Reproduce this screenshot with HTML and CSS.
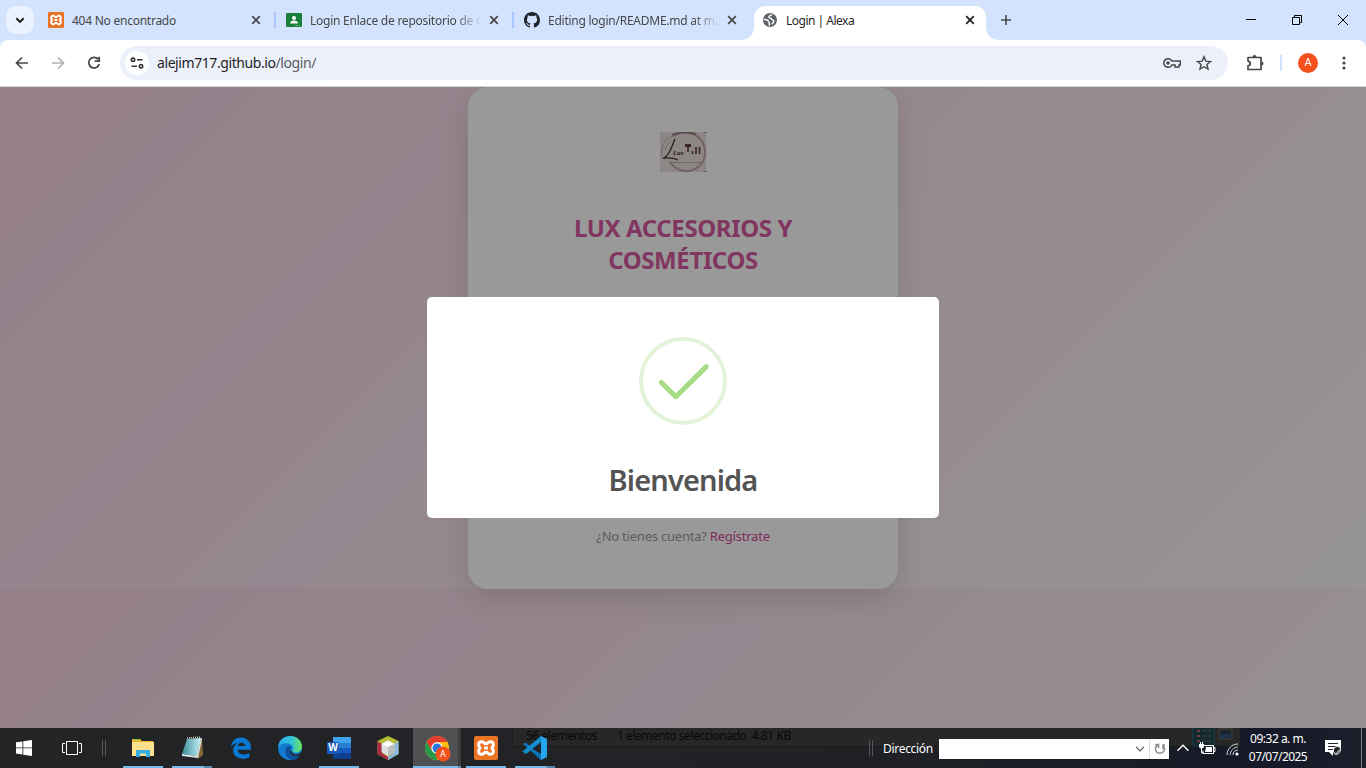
FILE: index.html
```html
<!DOCTYPE html>
<html lang="es">
<head>
<meta charset="utf-8">
<title>Login | Alexa</title>
<link rel="stylesheet" href="styles.css">
</head>
<body>
<svg class="defs" width="0" height="0">
  <symbol id="x" viewBox="0 0 10 10"><path d="M1.2 1.2l7.6 7.6M8.8 1.2L1.2 8.8" fill="none" stroke="currentColor" stroke-width="1.7"/></symbol>
  <symbol id="xampp" viewBox="0 0 24 24"><rect width="24" height="24" rx="2" fill="#ea7424"/><path d="M8.200 5.800C4.200 5.200 3.800 9.500 6 12c-2.200 2.500-1.800 6.800 2.200 6.200 2-.2 2-2 3.800-2s1.800 1.800 3.800 2c4 .6 4.400-3.700 2.200-6.200 2.200-2.500 1.800-6.800-2.200-6.200-2 .2-2 2-3.800 2s-1.800-1.800-3.800-2Z" fill="none" stroke="#fff" stroke-width="3"/><path d="M10 12h4" stroke="#fff" stroke-width="3"/></symbol>
</svg>
<div class="window">
  <header class="tabs">
    <div class="search-tabs"><svg width="10" height="7" viewBox="0 0 10 7"><path d="M1.300 1.200L5 4.900l3.700-3.700" fill="none" stroke="#1f1f1f" stroke-width="2"/></svg></div>
    <div class="tab first"><svg width="16" height="16"><use href="#xampp"/></svg><span class="tab-title t1">404 No encontrado</span><svg class="close" width="10" height="10"><use href="#x"/></svg></div>
    <div class="tab"><svg width="16" height="16" viewBox="0 0 16 16"><rect y="1" width="16" height="14" rx="1" fill="#188038"/><circle cx="8" cy="6" r="2" fill="#fff"/><path d="M4 11.500c0-4 8-4 8 0z" fill="#fff"/><path d="M9 13h5v1H9z" fill="#5bb974"/></svg><span class="tab-title t2 fade">Login Enlace de repositorio de G</span><svg class="close" width="10" height="10"><use href="#x"/></svg></div>
    <div class="tab"><svg width="16" height="16" viewBox="0 0 16 16"><path fill="#1f2328" d="M8 0C3.580 0 0 3.580 0 8c0 3.540 2.290 6.530 5.470 7.590.4.070.55-.17.55-.38 0-.19-.01-.82-.01-1.490-2.010.37-2.530-.49-2.690-.94-.09-.23-.48-.94-.82-1.130-.28-.15-.68-.52-.01-.53.63-.01 1.080.58 1.230.82.72 1.210 1.870.87 2.330.66.07-.52.28-.87.51-1.070-1.780-.2-3.640-.89-3.640-3.950 0-.87.31-1.590.82-2.150-.08-.2-.36-1.020.08-2.120 0 0 .67-.21 2.200.82a7.600 7.600 0 014 0c1.530-1.040 2.200-.82 2.200-.82.44 1.100.16 1.920.08 2.120.51.56.82 1.270.82 2.150 0 3.070-1.870 3.750-3.650 3.950.29.25.54.73.54 1.480 0 1.070-.01 1.930-.01 2.200 0 .21.15.46.55.38A8 8 0 0016 8c0-4.420-3.580-8-8-8z"/></svg><span class="tab-title t3 fade">Editing login/README.md at ma</span><svg class="close" width="10" height="10"><use href="#x"/></svg></div>
    <div class="tab active"><svg width="16" height="16" viewBox="0 0 16 16"><circle cx="8" cy="8" r="7" fill="#5f6368"/><path d="M9.800 2.400c-.2 1.600-3.200.9-3 2.600.2 1.400 2.600.6 2.800 2.200.1 1 2.600.5 2.300 2.300-.3 1.600-1.700 1.300-2 2.900M2 7.600c1.500 0 4 .2 4.200 1.500.2 1.200 1.300.8 1.100 2.400-.1.800.3 1.500-.2 2.200" fill="none" stroke="#fff" stroke-width="1.500"/></svg><span class="tab-title t4">Login | Alexa</span><svg class="close" width="10" height="10"><use href="#x"/></svg></div>
    <svg class="plus" width="10" height="10" viewBox="0 0 10 10"><path d="M0 5h10M5 0v10" stroke="#474747" stroke-width="1.600"/></svg>
    <div class="controls">
      <svg width="46" height="40" viewBox="0 0 46 40"><path d="M18 19.500h10" stroke="#000"/></svg>
      <svg width="46" height="40" viewBox="0 0 46 40"><path d="M18.500 17.500h7v7h-7zM20.500 17.500v-2h7v7h-2" fill="none" stroke="#000"/></svg>
      <svg width="46" height="40" viewBox="0 0 46 40"><path d="M18 15l10 10M28 15L18 25" stroke="#000"/></svg>
    </div>
  </header>
  <nav class="toolbar">
    <svg class="nav-ico" width="36" height="32" viewBox="0 0 36 32"><path d="M24 16H13M18 10.500L12.500 16l5.500 5.500" fill="none" stroke="#474747" stroke-width="1.700"/></svg>
    <svg class="nav-ico" width="36" height="32" viewBox="0 0 36 32"><path d="M12 16h11M18 10.500l5.500 5.500-5.500 5.500" fill="none" stroke="#b0b0b0" stroke-width="1.700"/></svg>
    <svg class="nav-ico" width="36" height="32" viewBox="0 0 36 32"><path d="M22.200 12.300A5.300 5.300 0 1 0 23.200 17M23.200 9.800v4.400h-4.600" fill="none" stroke="#474747" stroke-width="1.800"/></svg>
    <div class="omnibox">
      <div class="site"><svg width="14" height="12" viewBox="0 0 14 12"><g fill="none" stroke="#333" stroke-width="1.600"><circle cx="3" cy="2.800" r="1.700"/><path d="M7 2.800h5.500M1.500 9.200H7"/><circle cx="11" cy="9.200" r="1.700"/></g></svg></div>
      <span class="url">alejim717.github.io<i>/login/</i></span>
      <svg class="key" width="18" height="12" viewBox="0 0 18 12"><path d="M8.900 4A4.300 4.300 0 1 0 8.900 8H12v2h4V8h1.300V4z" fill="none" stroke="#474747" stroke-width="1.500"/><circle cx="5" cy="6" r="1.800" fill="#474747"/></svg>
      <svg class="star" width="16" height="16" viewBox="0 0 16 16"><path d="M8 1.800l1.800 4.300 4.700.4-3.600 3 1.100 4.600L8 11.700l-4 2.400 1.100-4.600-3.600-3 4.700-.4z" fill="none" stroke="#474747" stroke-width="1.400"/></svg>
    </div>
    <svg class="puzzle" width="18" height="18" viewBox="0 0 18 18"><path d="M2 3.500h13v12H2v-3.600c3-.6 3-4.200 0-4.800z" fill="none" stroke="#474747" stroke-width="1.700" stroke-linejoin="round"/><path d="M6.500 3a2 2 0 0 1 4 0M15.500 7.500a2 2 0 0 1 0 4" fill="#474747"/></svg>
    <span class="bar"></span><span class="avatar">A</span>
    <svg class="dots" width="4" height="14" viewBox="0 0 4 14" fill="#474747"><circle cx="2" cy="2" r="1.600"/><circle cx="2" cy="7" r="1.600"/><circle cx="2" cy="12" r="1.600"/></svg>
  </nav>
  <main class="page">
    <section class="card">
      <svg class="logo" width="46" height="40" viewBox="0 0 46 40"><rect width="46" height="40" fill="#e9dfdc"/><path d="M13 4C25-2 38 1 43 11c5 11 1 21-8 26C26 42 15 38 10 30" fill="none" stroke="#bda3a3" stroke-width="1.800"/><path d="M12 3c8-4 17-3 24-1" fill="none" stroke="#977c7c" stroke-width="1.500"/><path d="M2 25C0 13 6 6 13 4M5 18c2-5 3-7 6-9" fill="none" stroke="#aaa0a0" stroke-width=".8"/><path d="M15 7C11 17 9 23 4 26c4 0 8-1 14 2" fill="none" stroke="#433" stroke-width="1.300"/><text x="13" y="23" class="logo-name">Lux</text><path d="M28 12v8" stroke="#543436" stroke-width="1.500"/><path d="M25 13.500h6" stroke="#654246" stroke-width="3"/><path d="M32.500 19v3M36 15v7M39.500 15v7" stroke="#764a42" stroke-width="1.800"/><text x="9" y="31" class="logo-sub">ACCESORIOS Y COSMÉTICOS</text><path d="M45 0h1v1h-1zM45 39h1v1h-1z" fill="#333"/></svg>
      <h1><span class="h-one">LUX ACCESORIOS Y</span><br><span class="h-two">COSMÉTICOS</span></h1>
      <p class="register"><span>¿No tienes cuenta?</span> <a>Regístrate</a></p>
    </section>
    <div class="overlay">
      <div class="modal">
        <svg width="88" height="88" viewBox="0 0 88 88"><circle cx="44" cy="44" r="42" fill="none" stroke="#e2f3da" stroke-width="4"/><path d="M22.300 45.500l14.500 14.200L67.300 29.600" fill="none" stroke="#a5dc86" stroke-width="5" stroke-linecap="round" stroke-linejoin="round"/></svg>
        <h2>Bienvenida</h2>
      </div>
    </div>
  </main>
  <footer class="taskbar">
    <div class="ghost"><span class="g1">56 elementos</span><span class="g2">1 elemento seleccionado&nbsp; 4.81 KB</span><svg width="50" height="19" viewBox="0 0 50 19"><path d="M1 0v18h21V0" fill="#15282e" stroke="#12414f"/><path d="M5 3h3M5 8h3M5 13h3" stroke="#653d43" stroke-width="2"/><path d="M10 3h9M10 8h9M10 13h9" stroke="#3c464a" stroke-dasharray="4 1"/><path d="M27 1h13v10H27z" fill="#20252d" stroke="#454545"/><path d="M29 8h9" stroke="#18395c" stroke-width="3"/></svg></div>
    <div class="sys"><svg width="16" height="16" viewBox="0 0 16 16" fill="#fff"><path d="M0 2.300l6.500-.9v6.100H0zM7.300 1.300L16 0v7.500H7.300zM0 8.300h6.500v6.200L0 13.600zM7.300 8.300H16V16l-8.700-1.300z"/></svg></div>
    <div class="sys"><svg width="20" height="14" viewBox="0 0 20 14" fill="none" stroke="#fff"><path d="M4.500.5h11v13h-11zM3 2.500H.5v9H3M17 2.500h2.500v9H17"/></svg></div>
    <span class="grip"></span>
    <div class="apps">
      <div class="app run"><svg width="22" height="20" viewBox="0 0 22 20"><path d="M0 1h8l2 2h11v5H0z" fill="#e9b72f"/><path d="M2 1h5v1H2z" fill="#6bc05f"/><path d="M0 4h22v14H0z" fill="#fce28d"/><path d="M4 19v-7h14v7h-4v-3.500H8V19z" fill="#35aee4"/></svg></div>
      <div class="app run multi"><svg width="24" height="24" viewBox="0 0 24 24"><defs><linearGradient id="note"><stop stop-color="#388b9a"/><stop offset="1" stop-color="#c4f0f4"/></linearGradient></defs><path d="M7 3l15-1 1 17-5 4z" fill="#886a3c"/><path d="M7 3l14-1-4 18-15-2z" fill="url(#note)"/><path d="M2 18l15 2 4-18 1 1-4 19-16-2z" fill="#dce7e7"/><path d="M7 2l14-1" stroke="#ccc" stroke-width="1.500" stroke-dasharray="1 1"/></svg></div>
      <div class="app"><svg width="22" height="22" viewBox="0 0 22 22"><path d="M1 9.500C2 3.500 6 .5 11.200.5 17 .5 21 5 21 10.500v2.200H7.500c.3 5 7.500 6 12 3.300v4.200C11 24 3 20 3 13.500 3 10 5 7.400 8 6 5 6.300 2.500 7.500 1 9.500zM7.700 9h7.500C15 4.500 8.500 4.500 7.700 9z" fill="#0978d4"/></svg></div>
      <div class="app"><svg width="24" height="24" viewBox="0 0 24 24"><defs><linearGradient id="edge" x1="0" y1=".2" x2="1" y2=".2"><stop stop-color="#29a7e8"/><stop offset=".55" stop-color="#30c4d8"/><stop offset="1" stop-color="#6ee25b"/></linearGradient></defs><circle cx="12" cy="12" r="12" fill="#137bd1"/><path d="M.2 11C1 3.500 6.500 0 12 0c7 0 12 5 12 10.500 0 4-3 6-6 6-2.500 0-4-1-4-1.800 0-.7 1-1.300 1-3C15 7 4 5 .2 11z" fill="url(#edge)"/><path d="M8.500 11c-3 5 0 12 6 13 3 0 6-2 8-5-5 2.500-10.500 0-10.500-4 0-2 1-3 1.500-3.500-1-1.500-4-1.500-5-.5z" fill="#0c4f9c"/><path d="M14 14.700c-1 1 1 3.800 4 3.800 2 0 4-.8 5.500-3-1 5-3 3-1.200 3.700C17 21.500 12 19 12 15z" fill="#222628"/></svg></div>
      <div class="app run"><svg width="24" height="22" viewBox="0 0 24 22"><path d="M6 0h17q1 0 1 1v5H6z" fill="#41a5ee"/><path d="M6 6h18v5H6z" fill="#2b7cd3"/><path d="M6 11h18v5H6z" fill="#185abd"/><path d="M6 16h18v5q0 1-1 1H6z" fill="#103f91"/><rect y="5" width="12" height="12" rx="1" fill="#185abd"/><text x="6" y="14.400" class="word-w">W</text></svg></div>
      <div class="app"><svg width="22" height="24" viewBox="0 0 22 24"><path d="M11 0l10.500 5v13L11 24 .5 18V5z" fill="#b4bf36"/><path d="M.5 5L5 8v9l6 4v3L.5 18z" fill="#ad2948"/><path d="M21.500 5L17 8v9l-6 4v3l10.500-6z" fill="#8bb8e4"/><path d="M11 4l6.500 4v8L11 20l-6.500-4V8z" fill="#ddd"/><path d="M4.500 8l6.500 3 6.500-3L11 5z" fill="#fff"/><path d="M11 11v9l6.500-4V8z" fill="#b9bfba"/></svg></div>
      <div class="app run current"><svg width="26" height="26" viewBox="0 0 26 26"><circle cx="12" cy="12" r="12" fill="#fbc116"/><path d="M1.600 6A12 12 0 0 1 22.400 6H12L7 15z" fill="#e33b2e"/><path d="M1.600 6A12 12 0 0 0 12 24l5-9H7z" fill="#279847"/><circle cx="12" cy="12" r="5.700" fill="#fff"/><circle cx="12" cy="12" r="4.500" fill="#2878e4"/><circle cx="18" cy="18" r="7.500" fill="#f4511e"/><text x="18" y="21.200" class="badge">A</text></svg></div>
      <div class="app run"><svg width="24" height="24"><use href="#xampp"/></svg></div>
      <div class="app run multi code"><svg width="24" height="24" viewBox="0 0 24 24"><path d="M18 0L7 10 2.500 6.500 0 8l18 16v-6L8 12l10-7z" fill="#0876b8"/><path d="M18 0v6L3 18l-3-2v-1z" fill="#128ccc"/><path d="M18 0l6 3v18l-6 3z" fill="#24a6ee"/></svg></div>
    </div>
    <span class="grip right"></span>
    <span class="direction">Dirección</span>
    <div class="address"><svg width="10" height="6" viewBox="0 0 10 6"><path d="M1 .8l4 4 4-4" fill="none" stroke="#555" stroke-width="1.200"/></svg><span><svg width="12" height="12" viewBox="0 0 12 12"><path d="M3.300 2.200A4.500 4.500 0 1 0 9 2.500M1.500 1.500h3v3.500M9 6V2h2" fill="none" stroke="#888" stroke-width="1.500"/></svg></span></div>
    <svg class="up" width="14" height="8" viewBox="0 0 14 8"><path d="M1.500 6.800L7 1.300l5.500 5.500" fill="none" stroke="#fff" stroke-width="1.400"/></svg>
    <svg class="battery" width="17" height="13" viewBox="0 0 17 13"><path d="M4 3.500h10.500v8H4v-3M15 5.500h1v4h-1" fill="none" stroke="#fff"/><path d="M7 5h6v5H6zM0 2h5v3q-2.500 3-5 0z" fill="#fff"/><path d="M1.500 0v2M3.500 0v2M2.500 6v5H5" fill="none" stroke="#fff"/></svg>
    <svg class="wifi" width="14" height="14" viewBox="0 0 14 14"><g fill="none" stroke="#ddd"><path d="M1 13C1 7 6 2 12 2M4 13c0-4 4-8 8-8M7 13c0-3 2-5 5-5"/></g><circle cx="11" cy="12" r="1.600" fill="#fff"/></svg>
    <div class="clock"><span class="time">09:32 a. m.</span><span class="date">07/07/2025</span></div>
    <svg class="notice" width="17" height="17" viewBox="0 0 17 17"><path d="M0 0h16v12H8v4l-4-4H0z" fill="#fff"/><path d="M3 3.500h10M3 6.500h10M3 9.500h5" stroke="#20242c"/><circle cx="12.500" cy="12" r="4.300" fill="#20242c"/><path d="M15.500 8a4 4 0 1 0-5 6c2 1 5-1 5-6zM10 14.500l5-5" fill="#20242c" stroke="#fff"/></svg>
  </footer>
</div>
</body>
</html>
```

FILE: styles.css
```css
* { box-sizing: border-box; }
body { margin: 0; overflow: hidden; font-family: "Noto Sans", "Open Sans", sans-serif; }
.defs { position: absolute; }
svg { display: block; flex: none; }
.window { width: 1366px; height: 768px; display: flex; flex-direction: column; }

.tabs { height: 40px; display: flex; align-items: center; background: #d3e2fd; padding-left: 6px; flex: none; }
.search-tabs { width: 28px; height: 28px; border-radius: 10px; background: #ebf1fe; display: grid; place-items: center; }
.tab { width: 238px; height: 24px; display: flex; align-items: center; padding-left: 12px; position: relative; color: #474747; font-size: 12px; flex: none; }
.tab.first { margin-left: 2px; }
.tab::before { content: ""; width: 2px; height: 16px; background: #a8c7fa; position: absolute; left: 0; top: 4px; }
.tab.first::before, .tab.active::before { display: none; }
.tab-title { width: 171px; margin-left: 8px; overflow: hidden; white-space: nowrap; }
.t1 { letter-spacing: -.25px; }
.t2, .t3 { letter-spacing: -.25px; }
.t4 { letter-spacing: -.5px; }
.fade { -webkit-mask-image: linear-gradient(90deg, #000 145px, transparent 171px); mask-image: linear-gradient(90deg, #000 145px, transparent 171px); }
.close { margin-left: 8px; }
.tab.active { width: 232px; height: 34px; align-self: flex-end; margin-left: 4px; padding: 0 0 6px 8px; background: #fff; border-radius: 11px 11px 0 0; color: #1f1f1f; }
.tab.active::before, .tab.active::after { content: ""; display: block; width: 12px; height: 12px; position: absolute; top: auto; bottom: 0; left: -12px; background: radial-gradient(circle at 0 0, transparent 11.5px, #fff 12px); }
.tab.active::after { left: auto; right: -12px; background: radial-gradient(circle at 100% 0, transparent 11.5px, #fff 12px); }
.plus { margin-left: 15px; }
.controls { margin-left: auto; display: flex; }

.toolbar { height: 47px; flex: none; display: flex; align-items: center; padding: 0 20px 1px 4px; background: linear-gradient(#d3e2fd, #d3e2fd) 0 0 / 100% 8px no-repeat; position: relative; border-bottom: 1px solid #d5d5d5; z-index: 0; }
.toolbar::before { content: ""; position: absolute; inset: 0; background: #fff; border-radius: 8px 8px 0 0; z-index: -1; }
.omnibox { width: 1108px; height: 34px; margin-left: 8px; border-radius: 17px; background: #ecf0fa; display: flex; align-items: center; padding: 0 16px 0 5px; }
.site { width: 24px; height: 24px; border-radius: 12px; background: #fff; display: grid; place-items: center; }
.url { margin-left: 8px; color: #1f1f1f; font-size: 14px; letter-spacing: -.42px; }
.url i { color: #5a5d62; font-style: normal; }
.key { margin-left: auto; }
.star { margin-left: 15px; }
.puzzle { margin-left: 18px; }
.bar { width: 2px; height: 16px; background: #d3e2fd; margin-left: 16px; }
.avatar { width: 20px; height: 20px; border-radius: 10px; background: #f4511e; color: #fff; margin-left: 16px; text-align: center; font: 11px/20px Roboto, sans-serif; }
.dots { margin-left: 24px; }

.page { height: 641px; flex: none; position: relative; overflow: hidden; background: linear-gradient(135deg, #f8d4e5, #faf6fa) 0 0 / 100% 502px; }
.card { width: 430px; height: 502px; margin: 0 auto; padding-top: 45px; border-radius: 20px; background: #fff; box-shadow: 0 10px 30px rgba(0, 0, 0, .13); display: flex; flex-direction: column; align-items: center; }
.logo-name { font: italic bold 6.500px "Liberation Serif", serif; fill: #433; }
.logo-sub { font: 2.400px "Noto Sans", sans-serif; fill: #766; }
h1 { margin: 40px 0 0; color: #d85a9f; font-size: 24px; line-height: 32px; text-align: center; font-weight: 700; }
.h-one, .h-two { letter-spacing: -.38px; }
.register { margin: 251px 0 0; font-size: 13px; line-height: 18px; color: #999; letter-spacing: -.22px; }
.register a { color: #d14c93; }
.overlay { position: absolute; inset: 0; background: rgba(0, 0, 0, .4); display: grid; place-items: center; }
.modal { width: 512px; height: 221px; border-radius: 5px; background: #fff; display: flex; flex-direction: column; align-items: center; padding-top: 40px; }
h2 { margin: 35px 0 0; font-size: 29px; line-height: 40px; font-weight: 600; color: #545454; letter-spacing: -.85px; }

.taskbar { height: 40px; flex: none; display: flex; align-items: center; position: relative; z-index: 0; background: linear-gradient(90deg, #222426 0, #202225 60%, #1b1e27 82%, #141827 92%, #1c202b 100%); color: #fff; }
.taskbar::after { content: ""; position: absolute; right: 4px; top: 0; width: 1px; height: 40px; background: #777b84; }
.ghost { position: absolute; left: 512px; top: 0; width: 728px; height: 19px; background: #272727; border-bottom: 1px solid #1b1b1b; border-left: 1px solid #1b1b1b; color: #08080b; font-size: 12px; line-height: 16px; display: flex; padding-left: 13px; z-index: -1; letter-spacing: -.45px; white-space: nowrap; }
.g1 { width: 91px; }
.ghost svg { margin: 0 -2px 0 auto; }
.sys { width: 48px; height: 40px; display: grid; place-items: center; }
.grip { width: 4px; height: 16px; border: solid #55575a; border-width: 0 1px; margin-left: 6px; }
.apps { display: flex; gap: 1px; margin-left: 13px; }
.app { width: 48px; height: 40px; display: grid; place-items: center; position: relative; }
.run::after { content: ""; position: absolute; height: 2px; bottom: 0; left: 4px; width: 40px; background: #76b9ed; }
.multi::after { background: linear-gradient(90deg, #76b9ed 32px, #5787ac 32px); }
.current { background: linear-gradient(90deg, #4e5052 45px, #3b3d3f 45px); }
.current svg { margin: 2px 0 0 2px; }
.current::after { left: 0; width: 48px; background: linear-gradient(90deg, #76b9ed 45px, #6296bd 45px); }
.grip.right { margin-left: 310px; }
.direction { margin-left: 10px; width: 56px; font-size: 12px; letter-spacing: -.3px; }
.address { width: 230px; height: 20px; background: #fff; display: flex; align-items: center; justify-content: flex-end; position: relative; top: 1px; }
.address span { width: 20px; height: 20px; margin-left: 4px; border-left: 1px solid #ddd; display: grid; place-items: center; }
.up { margin-left: 7px; }
.battery { margin-left: 9px; }
.wifi { margin-left: 10px; position: relative; top: 1px; }
.clock { width: 76px; margin-left: 0; text-align: center; font-size: 12px; line-height: 18px; display: flex; flex-direction: column; white-space: nowrap; }
.time { letter-spacing: -.5px; }
.date { letter-spacing: -.55px; }
.notice { margin-left: 9px; }
.word-w { font: bold 10px "Noto Sans", sans-serif; fill: #fff; text-anchor: middle; }
.badge { font: 9px Roboto, sans-serif; fill: #fff; text-anchor: middle; }
```
